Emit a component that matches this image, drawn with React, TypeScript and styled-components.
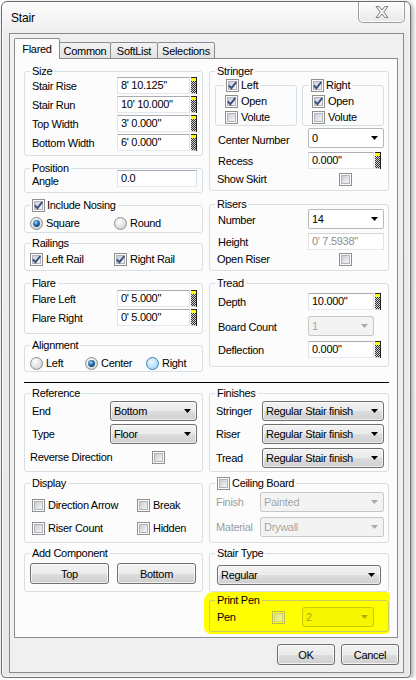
import React from 'react';
import styled, { createGlobalStyle, css } from 'styled-components';

const GlobalStyle = createGlobalStyle`
  html, body {
    margin: 0;
    padding: 0;
    background: #ffffff;
  }
  body {
    font-family: "Liberation Sans", Arial, sans-serif;
    font-size: 11px;
    letter-spacing: -0.3px;
    color: #000;
  }
  * {
    box-sizing: border-box;
  }
`;

const Page = styled.div`
  padding: 1px 0 0 1px;
`;

const Window = styled.div`
  width: 410px;
  height: 677px;
  border: 1px solid #6d6d6d;
  border-radius: 6px 6px 5px 5px;
  background: linear-gradient(to bottom, #fcfcfc 0, #ececec 34px, #e8e8e8 100%);
  box-shadow: 2px 2px 5px rgba(0, 0, 0, 0.35), inset 0 0 0 1px #fafafa;
  display: flex;
  flex-direction: column;
`;

const TitleBar = styled.div`
  height: 31px;
  flex: none;
  display: flex;
  justify-content: space-between;
  align-items: flex-start;
  padding-left: 9px;
`;

const TitleText = styled.div`
  font-size: 12px;
  letter-spacing: -0.2px;
  line-height: 33px;
`;

const CloseButton = styled.div`
  width: 47px;
  height: 21px;
  margin-right: 5px;
  border: 1px solid #9c9c9c;
  border-top: none;
  border-radius: 0 0 5px 5px;
  background: linear-gradient(#fdfdfd, #e9e9e9);
  box-shadow: inset 0 0 0 1px rgba(255, 255, 255, 0.9);
  display: flex;
  align-items: center;
  justify-content: center;
`;

const Client = styled.div`
  margin: 0 6px 0 7px;
  height: 640px;
  flex: none;
  border: 1px solid #8a8a8a;
  background: #f0f0f0;
  padding: 4px 5px 0 4px;
  display: flex;
  flex-direction: column;
`;

const TabStrip = styled.div`
  height: 20px;
  display: flex;
  align-items: flex-end;
`;

const Tab = styled.div<{ $active?: boolean; $w: number }>`
  position: relative;
  width: ${p => p.$w}px;
  height: ${p => (p.$active ? 21 : 17)}px;
  margin-bottom: -1px;
  margin-left: -1px;
  border: 1px solid #898c95;
  border-radius: 2px 2px 0 0;
  display: flex;
  align-items: center;
  justify-content: center;
  &:first-child {
    margin-left: 0;
  }
  ${p =>
    p.$active
      ? css`
          z-index: 2;
          border-bottom: none;
          background: #fcfcfc;
        `
      : css`
          z-index: 1;
          background: linear-gradient(#f3f3f3, #e3e3e3);
        `}
`;

const Panel = styled.div`
  height: 580px;
  flex: none;
  border: 1px solid #898c95;
  background: #fcfcfc;
  padding: 0 8px 0 9px;
`;

const Columns = styled.div`
  display: grid;
  grid-template-columns: 179px 180px;
  column-gap: 6px;
  align-items: start;
`;

const Column = styled.div`
  display: flex;
  flex-direction: column;
`;

const Divider = styled.div`
  margin-top: 10px;
  height: 1px;
  background: #000;
`;

const Group = styled.div<{ $mt: number; $pad: string; $pen?: boolean }>`
  position: relative;
  margin-top: ${p => p.$mt}px;
  padding: ${p => p.$pad};
  border: 1px solid ${p => (p.$pen ? '#c9cc62' : '#d5dfe5')};
  border-radius: 3px;
`;

const GroupTitle = styled.div<{ $bg?: string; $left?: number }>`
  position: absolute;
  top: -7px;
  left: ${p => p.$left ?? 5}px;
  height: 13px;
  padding: 0 2px;
  line-height: 13px;
  background: ${p => p.$bg ?? '#fcfcfc'};
  display: flex;
  align-items: center;
  gap: 2px;
  white-space: nowrap;
`;

const SubGroups = styled.div`
  display: flex;
  gap: 5px;
  margin-left: -3px;
`;

const SubGroup = styled.div`
  position: relative;
  flex: 1;
  height: 41px;
  padding: 7px 0 0 9px;
  border: 1px solid #d5dfe5;
  border-radius: 3px;
`;

const Row = styled.div<{ $h: number; $mt?: number; $gap?: number }>`
  display: flex;
  align-items: center;
  height: ${p => p.$h}px;
  margin-top: ${p => p.$mt ?? 0}px;
  gap: ${p => p.$gap ?? 0}px;
`;

const Label = styled.span<{ $w?: number; $dim?: boolean; $dy?: number; $ml?: number }>`
  flex: none;
  width: ${p => (p.$w ? `${p.$w}px` : 'auto')};
  margin-top: ${p => p.$dy ?? 0}px;
  margin-left: ${p => p.$ml ?? 0}px;
  white-space: nowrap;
  color: ${p => (p.$dim ? '#9d9d9d' : '#000')};
`;

const Cell = styled.div<{ $w?: number }>`
  flex: none;
  width: ${p => (p.$w ? `${p.$w}px` : 'auto')};
  display: flex;
  align-items: center;
  gap: 3px;
  white-space: nowrap;
`;

const Field = styled.div<{ $w: number; $disabled?: boolean }>`
  flex: none;
  width: ${p => p.$w}px;
  height: 17px;
  padding-left: 3px;
  line-height: 15px;
  white-space: nowrap;
  background: #fff;
  border: 1px solid;
  border-color: ${p =>
    p.$disabled ? '#d5d5d5 #e3e3e3 #e6e6e6 #e3e3e3' : '#abadb3 #dbdfe6 #e3e9ef #e2e3ea'};
  color: ${p => (p.$disabled ? '#8d8d8d' : '#000')};
`;

type ComboKind = 'button' | 'edit' | 'disabled';

const ComboBox = styled.div<{ $w: number; $kind: ComboKind }>`
  flex: none;
  width: ${p => p.$w}px;
  height: 20px;
  padding: 0 5px 0 3px;
  display: flex;
  align-items: center;
  justify-content: space-between;
  white-space: nowrap;
  border-radius: 3px;
  ${p =>
    p.$kind === 'button' &&
    css`
      border: 1px solid #707070;
      background: linear-gradient(#f2f2f2 0%, #ebebeb 50%, #dddddd 52%, #cfcfcf 100%);
      box-shadow: inset 0 0 0 1px rgba(255, 255, 255, 0.6);
    `}
  ${p =>
    p.$kind === 'edit' &&
    css`
      border: 1px solid #b5b8bf;
      border-radius: 2px;
      background: #fff;
    `}
  ${p =>
    p.$kind === 'disabled' &&
    css`
      border: 1px solid rgba(0, 0, 0, 0.18);
      background: rgba(0, 0, 0, 0.035);
      color: rgba(0, 0, 0, 0.36);
    `}
`;

const PushButton = styled.div<{ $w: number }>`
  flex: none;
  width: ${p => p.$w}px;
  height: 21px;
  border: 1px solid #707070;
  border-radius: 3px;
  background: linear-gradient(#f2f2f2 0%, #ebebeb 50%, #dddddd 52%, #cfcfcf 100%);
  box-shadow: inset 0 0 0 1px rgba(255, 255, 255, 0.7);
  display: flex;
  align-items: center;
  justify-content: center;
`;

const Footer = styled.div`
  display: flex;
  justify-content: flex-end;
  gap: 6px;
  margin: 6px -1px 0 0;
`;

const PenHighlight = styled.div`
  margin: 0 -1px 0 -5px;
  padding: 8px 1px 2px 5px;
  background: #ffff00;
  border-radius: 9px 4px 5px 7px;
`;

const Icon = styled.svg<{ $dim?: boolean; $ml?: number }>`
  flex: none;
  display: block;
  margin-left: ${p => p.$ml ?? 0}px;
  opacity: ${p => (p.$dim ? 0.6 : 1)};
`;

const CheckBox: React.FC<{ checked?: boolean; dim?: boolean; ml?: number }> = ({ checked, dim, ml }) => (
  <Icon width={13} height={13} viewBox="0 0 13 13" $dim={dim} $ml={ml}>
    <defs>
      <linearGradient id="cbFace" x1="0" y1="0" x2="1" y2="1">
        <stop offset="0" stopColor="#c6cad1" />
        <stop offset="1" stopColor="#f8f8f8" />
      </linearGradient>
    </defs>
    <rect x="0.5" y="0.5" width="12" height="12" fill={dim ? 'none' : '#fbfbfb'} stroke="#8e8f8f" />
    <rect x="2.5" y="2.5" width="8" height="8" fill="url(#cbFace)" stroke="#b0b4ba" />
    {checked && (
      <path d="M2.8 6.4 L5.4 9.2 L10.3 3" fill="none" stroke="#3b4c7e" strokeWidth="1.9" />
    )}
  </Icon>
);

type RadioState = 'off' | 'on' | 'hover';

const Radio: React.FC<{ state?: RadioState }> = ({ state = 'off' }) => (
  <Icon width={13} height={13} viewBox="0 0 13 13">
    <defs>
      <radialGradient id="rdFace" cx="0.4" cy="0.35" r="0.7">
        <stop offset="0" stopColor="#ffffff" />
        <stop offset="1" stopColor="#d0d0d0" />
      </radialGradient>
      <radialGradient id="rdHover" cx="0.4" cy="0.35" r="0.7">
        <stop offset="0" stopColor="#eef8fe" />
        <stop offset="1" stopColor="#9ed3f3" />
      </radialGradient>
      <radialGradient id="rdDot" cx="0.4" cy="0.35" r="0.65">
        <stop offset="0" stopColor="#a9dcff" />
        <stop offset="0.55" stopColor="#2a73b8" />
        <stop offset="1" stopColor="#103f74" />
      </radialGradient>
    </defs>
    <circle
      cx="6.5"
      cy="6.5"
      r="6"
      fill={state === 'hover' ? 'url(#rdHover)' : 'url(#rdFace)'}
      stroke={state === 'hover' ? '#3d7fb4' : '#8e8f8f'}
    />
    {state === 'on' && <circle cx="6.5" cy="6.5" r="3.4" fill="url(#rdDot)" />}
  </Icon>
);

const Spin: React.FC = () => (
  <Icon width={6} height={17} viewBox="0 0 6 17" $ml={1}>
    <rect x="0" y="0" width="6" height="17" fill="#cfcfcf" />
    <rect x="0" y="0" width="6" height="1" fill="#222" />
    <rect x="0" y="1" width="6" height="3" fill="#ffff00" />
    {Array.from({ length: 12 }).map((_, i) => (
      <g key={i}>
        <rect x={i % 2} y={4 + i} width="1" height="1" fill="#333" />
        <rect x={2 + (i % 2)} y={4 + i} width="1" height="1" fill="#333" />
        <rect x={4 + (i % 2)} y={4 + i} width="1" height="1" fill="#333" />
      </g>
    ))}
    <rect x="5" y="1" width="1" height="16" fill="#222" />
  </Icon>
);

const Arrow: React.FC<{ color?: string }> = ({ color = '#000' }) => (
  <Icon width={7} height={4} viewBox="0 0 7 4">
    <polygon points="0,0 7,0 3.5,4" fill={color} />
  </Icon>
);

const Combo: React.FC<{ w: number; kind?: ComboKind; value: string }> = ({ w, kind = 'button', value }) => (
  <ComboBox $w={w} $kind={kind}>
    <span>{value}</span>
    <Arrow color={kind === 'disabled' ? 'rgba(0,0,0,0.3)' : '#000'} />
  </ComboBox>
);

const CloseGlyph: React.FC = () => (
  <svg width={14} height={12} viewBox="0 0 14 12">
    <polygon
      points="1,0.5 4.2,0.5 7,4 9.8,0.5 13,0.5 8.7,6 13,11.5 9.8,11.5 7,8 4.2,11.5 1,11.5 5.3,6"
      fill="#f6f6f6"
      stroke="#7b7b7b"
      strokeWidth="1"
      strokeLinejoin="round"
    />
  </svg>
);

const sizeRows = [
  ['Stair Rise', `8' 10.125"`],
  ['Stair Run', `10' 10.000"`],
  ['Top Width', `3' 0.000"`],
  ['Bottom Width', `6' 0.000"`],
];

const finishRows = ['Stringer', 'Riser', 'Tread'];

const tabs = [
  { name: 'Flared', w: 46, active: true },
  { name: 'Common', w: 52 },
  { name: 'SoftList', w: 48 },
  { name: 'Selections', w: 58 },
];

export default function App() {
  return (
    <Page>
      <GlobalStyle />
      <Window>
        <TitleBar>
          <TitleText>Stair</TitleText>
          <CloseButton>
            <CloseGlyph />
          </CloseButton>
        </TitleBar>

        <Client>
          <TabStrip>
            {tabs.map(t => (
              <Tab key={t.name} $w={t.w} $active={t.active}>
                {t.name}
              </Tab>
            ))}
          </TabStrip>

          <Panel>
            <Columns>
              <Column>
                <Group $mt={12} $pad="4px 0 3px 7px">
                  <GroupTitle>Size</GroupTitle>
                  {sizeRows.map(([label, value]) => (
                    <Row key={label} $h={19}>
                      <Label $w={85}>{label}</Label>
                      <Field $w={73}>{value}</Field>
                      <Spin />
                    </Row>
                  ))}
                </Group>

                <Group $mt={12} $pad="0 0 4px 7px">
                  <GroupTitle>Position</GroupTitle>
                  <Row $h={19}>
                    <Label $w={85} $dy={5}>Angle</Label>
                    <Field $w={80}>0.0</Field>
                  </Row>
                </Group>

                <Group $mt={12} $pad="9px 0 1px 5px">
                  <GroupTitle>
                    <CheckBox checked />
                    Include Nosing
                  </GroupTitle>
                  <Row $h={16}>
                    <Cell $w={84}>
                      <Radio state="on" />
                      Square
                    </Cell>
                    <Cell>
                      <Radio />
                      Round
                    </Cell>
                  </Row>
                </Group>

                <Group $mt={10} $pad="7px 0 3px 5px">
                  <GroupTitle>Railings</GroupTitle>
                  <Row $h={16}>
                    <Cell $w={84}>
                      <CheckBox checked />
                      Left Rail
                    </Cell>
                    <Cell>
                      <CheckBox checked />
                      Right Rail
                    </Cell>
                  </Row>
                </Group>

                <Group $mt={12} $pad="5px 0 6px 7px">
                  <GroupTitle>Flare</GroupTitle>
                  <Row $h={19}>
                    <Label $w={85}>Flare Left</Label>
                    <Field $w={73}>0' 5.000"</Field>
                    <Spin />
                  </Row>
                  <Row $h={19}>
                    <Label $w={85}>Flare Right</Label>
                    <Field $w={73}>0' 5.000"</Field>
                    <Spin />
                  </Row>
                </Group>

                <Group $mt={11} $pad="10px 0 1px 5px">
                  <GroupTitle>Alignment</GroupTitle>
                  <Row $h={14}>
                    <Cell $w={55}>
                      <Radio />
                      Left
                    </Cell>
                    <Cell $w={61}>
                      <Radio state="on" />
                      Center
                    </Cell>
                    <Cell>
                      <Radio state="hover" />
                      Right
                    </Cell>
                  </Row>
                </Group>
              </Column>

              <Column>
                <Group $mt={12} $pad="13px 4px 3px 8px">
                  <GroupTitle>Stringer</GroupTitle>
                  <SubGroups>
                    <SubGroup>
                      <GroupTitle $left={8}>
                        <CheckBox checked />
                        Left
                      </GroupTitle>
                      <Row $h={16} $gap={3}>
                        <CheckBox checked />
                        Open
                      </Row>
                      <Row $h={16} $gap={3}>
                        <CheckBox />
                        Volute
                      </Row>
                    </SubGroup>
                    <SubGroup>
                      <GroupTitle $left={6}>
                        <CheckBox checked />
                        Right
                      </GroupTitle>
                      <Row $h={16} $gap={3}>
                        <CheckBox checked />
                        Open
                      </Row>
                      <Row $h={16} $gap={3}>
                        <CheckBox />
                        Volute
                      </Row>
                    </SubGroup>
                  </SubGroups>
                  <Row $h={20} $mt={2}>
                    <Label $w={90} $dy={3}>Center Number</Label>
                    <Combo w={76} kind="edit" value="0" />
                  </Row>
                  <Row $h={19} $mt={3}>
                    <Label $w={90}>Recess</Label>
                    <Field $w={66}>0.000"</Field>
                    <Spin />
                  </Row>
                  <Row $h={16} $mt={1}>
                    <Label $w={122} $ml={-1}>Show Skirt</Label>
                    <CheckBox />
                  </Row>
                </Group>

                <Group $mt={13} $pad="4px 4px 3px 8px">
                  <GroupTitle>Risers</GroupTitle>
                  <Row $h={20}>
                    <Label $w={90} $dy={2}>Number</Label>
                    <Combo w={76} kind="edit" value="14" />
                  </Row>
                  <Row $h={18} $mt={3}>
                    <Label $w={90} $dy={2}>Height</Label>
                    <Field $w={76} $disabled>0' 7.5938"</Field>
                  </Row>
                  <Row $h={16} $mt={1}>
                    <Label $w={122} $ml={-1}>Open Riser</Label>
                    <CheckBox />
                  </Row>
                </Group>

                <Group $mt={12} $pad="8px 4px 8px 8px">
                  <GroupTitle>Tread</GroupTitle>
                  <Row $h={18}>
                    <Label $w={90} $dy={2}>Depth</Label>
                    <Field $w={66}>10.000"</Field>
                    <Spin />
                  </Row>
                  <Row $h={20} $mt={6}>
                    <Label $w={90} $dy={2}>Board Count</Label>
                    <Combo w={66} kind="disabled" value="1" />
                  </Row>
                  <Row $h={18} $mt={4}>
                    <Label $w={90} $dy={2}>Deflection</Label>
                    <Field $w={66}>0.000"</Field>
                    <Spin />
                  </Row>
                </Group>
              </Column>
            </Columns>

            <Divider />

            <Columns>
              <Column>
                <Group $mt={10} $pad="7px 0 7px 7px">
                  <GroupTitle>Reference</GroupTitle>
                  <Row $h={20}>
                    <Label $w={78}>End</Label>
                    <Combo w={87} value="Bottom" />
                  </Row>
                  <Row $h={20} $mt={3}>
                    <Label $w={78}>Type</Label>
                    <Combo w={87} value="Floor" />
                  </Row>
                  <Row $h={14} $mt={6}>
                    <Label $w={122} $ml={-2}>Reverse Direction</Label>
                    <CheckBox />
                  </Row>
                </Group>

                <Group $mt={11} $pad="13px 0 6px 7px">
                  <GroupTitle>Display</GroupTitle>
                  <Row $h={16}>
                    <Cell $w={105}>
                      <CheckBox />
                      Direction Arrow
                    </Cell>
                    <Cell>
                      <CheckBox />
                      Break
                    </Cell>
                  </Row>
                  <Row $h={16} $mt={7}>
                    <Cell $w={105}>
                      <CheckBox />
                      Riser Count
                    </Cell>
                    <Cell>
                      <CheckBox />
                      Hidden
                    </Cell>
                  </Row>
                </Group>

                <Group $mt={10} $pad="9px 0 7px 5px">
                  <GroupTitle>Add Component</GroupTitle>
                  <Row $h={21} $gap={8}>
                    <PushButton $w={79}>Top</PushButton>
                    <PushButton $w={79}>Bottom</PushButton>
                  </Row>
                </Group>
              </Column>

              <Column>
                <Group $mt={10} $pad="7px 4px 3px 6px">
                  <GroupTitle>Finishes</GroupTitle>
                  {finishRows.map((label, i) => (
                    <Row key={label} $h={20} $mt={i === 0 ? 0 : i === 1 ? 3 : 4}>
                      <Label $w={46}>{label}</Label>
                      <Combo w={122} value="Regular Stair finish" />
                    </Row>
                  ))}
                </Group>

                <Group $mt={11} $pad="8px 4px 5px 6px">
                  <GroupTitle>
                    <CheckBox />
                    Ceiling Board
                  </GroupTitle>
                  <Row $h={20}>
                    <Label $w={44} $dim>Finish</Label>
                    <Combo w={124} kind="disabled" value="Painted" />
                  </Row>
                  <Row $h={20} $mt={5}>
                    <Label $w={44} $dim>Material</Label>
                    <Combo w={124} kind="disabled" value="Drywall" />
                  </Row>
                </Group>

                <Group $mt={10} $pad="11px 0 6px 7px">
                  <GroupTitle>Stair Type</GroupTitle>
                  <Row $h={20}>
                    <Combo w={164} value="Regular" />
                  </Row>
                </Group>

                <PenHighlight>
                  <Group $mt={0} $pad="6px 0 4px 7px" $pen>
                    <GroupTitle $bg="#ffff00">Print Pen</GroupTitle>
                    <Row $h={20}>
                      <Label $w={55}>Pen</Label>
                      <CheckBox dim />
                      <Label $w={17} />
                      <Combo w={72} kind="disabled" value="2" />
                    </Row>
                  </Group>
                </PenHighlight>
              </Column>
            </Columns>
          </Panel>

          <Footer>
            <PushButton $w={58}>OK</PushButton>
            <PushButton $w={58}>Cancel</PushButton>
          </Footer>
        </Client>
      </Window>
    </Page>
  );
}
